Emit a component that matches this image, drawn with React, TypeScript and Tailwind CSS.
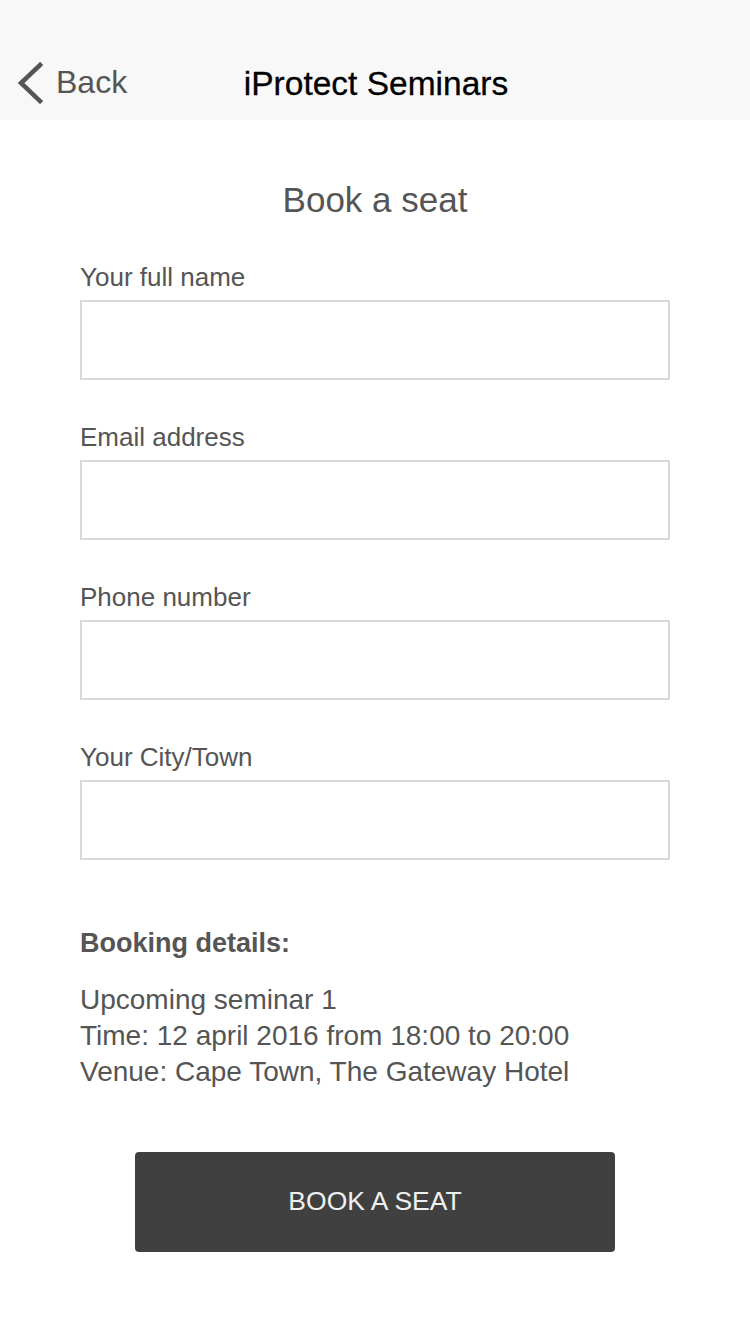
export default function App() {
  const fields = ["Your full name", "Email address", "Phone number", "Your City/Town"];

  return (
    <div className="min-h-screen bg-white font-['Liberation_Sans',Arial,sans-serif] text-[#555555]">
      <div className="relative h-[120px] bg-[#f8f8f8] flex items-center justify-center pt-[8px]">
        <button className="absolute left-[16px] top-[62px] flex items-center gap-[10px] text-[32px] leading-[44px] text-[#555555]">
          <svg width="30" height="42" viewBox="0 0 30 42" fill="none">
            <polyline points="24,3 5,21 24,39" stroke="#555555" strokeWidth="4.5" strokeLinecap="square" />
          </svg>
          <span className="-mt-[2px]">Back</span>
        </button>
        <h1 className="text-[33.5px] leading-[44px] text-black mt-[40px] ml-[2px] [-webkit-text-stroke:0.3px_black]">
          iProtect Seminars
        </h1>
      </div>

      <div className="px-[80px] flex flex-col">
        <h2 className="mt-[60px] text-center text-[35px] leading-[40px]">Book a seat</h2>

        {fields.map((label) => (
          <div key={label} className="mt-[42px]">
            <label className="block text-[26px] leading-[30px] mb-[8px]">{label}</label>
            <input
              type="text"
              className="block w-full h-[80px] border-2 border-[#d9d9d9] bg-white px-4 text-[26px] outline-none"
            />
          </div>
        ))}

        <div className="mt-[68px] text-[27px] leading-[30px] font-bold">Booking details:</div>
        <div className="mt-[24px] text-[28px] leading-[36px]">
          <p>Upcoming seminar 1</p>
          <p>Time: 12 april 2016 from 18:00 to 20:00</p>
          <p>Venue: Cape Town, The Gateway Hotel</p>
        </div>

        <button className="mt-[62px] mx-auto w-[480px] h-[100px] rounded-[4px] bg-[#404040] text-[#f0f0f0] text-[26.5px]">
          BOOK A SEAT
        </button>
      </div>
    </div>
  );
}
